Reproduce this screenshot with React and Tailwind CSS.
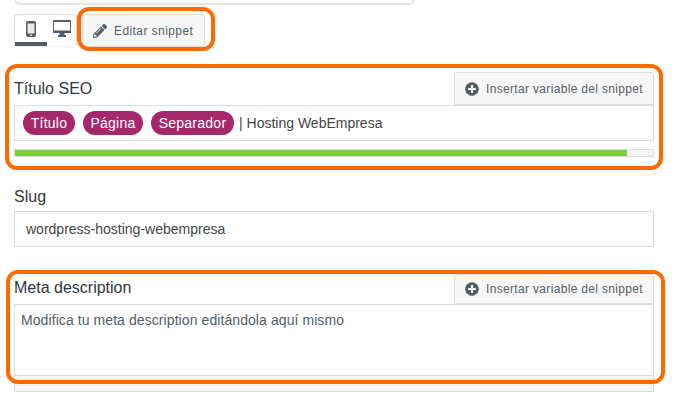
import React from 'react';
import { FaPencilAlt, FaPlusCircle } from 'react-icons/fa';

const PhoneIcon = () => (
  <svg width="11" height="17" viewBox="0 0 11 17" className="block">
    <rect x="0" y="0" width="10" height="16" rx="2" fill="#555d66" />
    <rect x="1.5" y="2.5" width="7" height="10" fill="#e9e9e9" />
    <circle cx="5" cy="14.2" r="0.9" fill="#e9e9e9" />
  </svg>
);

const DesktopIcon = () => (
  <svg width="18" height="17" viewBox="0 0 18 17" className="block">
    <path d="M0 1a1 1 0 0 1 1-1h16a1 1 0 0 1 1 1v12H0z" fill="#555d66" />
    <rect x="1" y="2" width="16" height="8.5" fill="#fff" />
    <path d="M6.5 13h5v2h1.5v2H5v-2h1.5z" fill="#555d66" />
  </svg>
);

const InsertButton = ({ className = '' }) => (
  <button className={`w-[200px] flex items-center gap-[7px] pl-[10px] bg-[#f7f7f7] border border-[#dcdcdc] rounded-t-[3px] text-[12px] tracking-[0.33px] text-[#555d66] ${className}`}>
    <FaPlusCircle className="w-[14px] h-[14px] text-[#555d66]" />
    Insertar variable del snippet
  </button>
);

const Pill = ({ children, className = '' }) => (
  <span className={`h-6 flex items-center justify-center rounded-full bg-[#a4286a] text-white tracking-[0.25px] ${className}`}>{children}</span>
);

// marco naranja encima del contenido
const Ring = ({ className }) => (
  <div className={`absolute border-[4px] border-[#ff6a00] rounded-[12px] pointer-events-none ${className}`}></div>
);

export default function App() {
  return (
    <div className="w-[677px] h-[412px] overflow-hidden bg-white pl-[14px] text-[#444] font-['Liberation_Sans',Arial,sans-serif]">
      <div className="h-[5px] w-[400px] border-x-2 border-b-2 border-[#e5e5e5] rounded-b-[8px]"></div>

      {/* --- Pestañas --- */}
      <div className="flex mt-[9px] h-[33px] items-stretch">
        <div className="relative w-[63px] flex border border-[#dcdcdc] [border-bottom-style:dotted] rounded-[4px]">
          <div className="w-[32px] flex justify-center pt-[6px] pl-[1px] border-b-[4px] border-[#555d66]">
            <PhoneIcon />
          </div>
          <div className="flex-1 flex justify-center pt-[5px]">
            <DesktopIcon />
          </div>
        </div>
        <div className="relative ml-[5px]">
          <button className="w-[123px] h-full flex items-center gap-[8px] pl-[10px] bg-[#f7f7f7] border border-[#dcdcdc] rounded-[3px] text-[12px] tracking-[0.42px] text-[#555d66]">
            <FaPencilAlt className="w-[14px] h-[14px]" />
            <span className="-ml-[1px]">Editar snippet</span>
          </button>
          <Ring className="-left-[5px] -right-[10px] -top-[7px] -bottom-[4px]" />
        </div>
      </div>

      {/* --- Titulo --- */}
      <section className="relative mt-[25px] w-[640px]">
        <div className="flex justify-between items-center h-[33px]">
          <label className="text-[16px] text-[#32373c]">Título SEO</label>
          <InsertButton className="h-[33px]" />
        </div>
        <div className="h-[36px] flex items-center gap-2 pl-[8px] border border-[#dcdcdc] text-[14px] text-[#444]">
          <Pill className="w-[52px]">Título</Pill>
          <Pill className="w-[60px]">Página</Pill>
          <Pill className="w-[83px]">Separador</Pill>
          <span className="-ml-[3px]">| Hosting WebEmpresa</span>
        </div>
        <div className="mt-[8px] h-[8px] border border-[#dcdcdc] bg-[#f5f5f5]">
          <div className="h-full w-[612px] bg-[#7ad03a]"></div>
        </div>
        <Ring className="-left-[9px] right-[-9px] -top-[8px] -bottom-[13px]" />
      </section>

      {/* --- Slug --- */}
      <section className="mt-[30px] w-[640px]">
        <label className="block h-[24px] text-[16px] leading-[20px] text-[#32373c]">Slug</label>
        <div className="h-[36px] flex items-center pl-[11px] border border-[#dcdcdc] text-[14px] text-[#444]">
          wordpress-hosting-webempresa
        </div>
      </section>

      {/* --- Meta --- */}
      <section className="relative mt-[27px] w-[640px]">
        <div className="flex justify-between items-center h-[30px]">
          <label className="text-[16px] text-[#32373c] -mt-[2px]">Meta description</label>
          <InsertButton className="h-[30px]" />
        </div>
        <div className="h-[72px] pl-[6px] pt-[5px] border border-[#dcdcdc] text-[14px] tracking-[0.08px] leading-[20px] text-[#555d66]">
          Modifica tu meta description editándola aquí mismo
        </div>
        <Ring className="-left-[8px] -right-[11px] -top-[4px] -bottom-[8px]" />
      </section>
      <div className="w-[640px] h-[16px] bg-[#f5f5f5] border-x border-b border-[#dcdcdc]"></div>
    </div>
  );
}
